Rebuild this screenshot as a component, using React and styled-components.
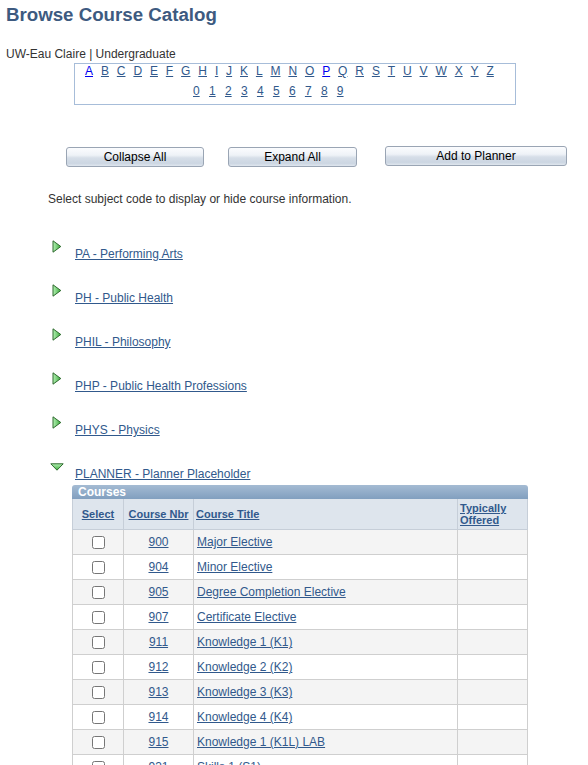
import React from 'react'
import styled, { createGlobalStyle } from 'styled-components'

const GlobalStyle = createGlobalStyle`
  html, body {
    margin: 0;
    padding: 0;
    overflow: hidden;
    background: #fff;
  }
  body {
    font-family: "Liberation Sans", Arial, sans-serif;
    font-size: 12px;
    color: #333;
  }
`

const Page = styled.div`
  padding: 4px 0 0 6px;
`

const Title = styled.h1`
  margin: 0;
  font-size: 18.7px;
  line-height: 22px;
  font-weight: bold;
  color: #3d5a80;
`

const Campus = styled.div`
  margin-top: 21px;
  line-height: 14px;
`

const AlphaBox = styled.div`
  margin: 2px 0 0 68px;
  width: 440px;
  border: 1px solid #a7bdd9;
  padding: 0 0 6px;
  display: flex;
  flex-direction: column;
  gap: 6px;
`

const AlphaRow = styled.div`
  display: flex;
  gap: ${props => props.$gap}px;
  padding-left: ${props => props.$indent}px;
  line-height: 14px;
`

const Link = styled.a`
  color: #31598c;
  text-decoration: underline;
  cursor: pointer;
`

const AlphaLink = styled(Link)`
  color: ${props => (props.$active ? '#0000ee' : '#31598c')};
`

const ButtonBar = styled.div`
  display: flex;
  align-items: flex-start;
  margin: 42px 0 0 60px;
`

const Button = styled.button`
  width: ${props => props.$w}px;
  height: 20px;
  margin-left: ${props => props.$ml || 0}px;
  margin-top: ${props => props.$mt || 0}px;
  padding: 0;
  font-family: "Liberation Sans", Arial, sans-serif;
  font-size: 12px;
  color: #000;
  border: 1px solid #9aa5b4;
  border-radius: 3px;
  background: linear-gradient(#fbfcfe 0%, #eef2f7 40%, #d6dee8 55%, #ccd6e2 85%, #dfe6ee 100%);
`

const Instruction = styled.div`
  margin: 25px 0 0 42px;
  line-height: 14px;
`

const SubjectList = styled.div`
  margin: 34px 0 0 44px;
`

const Subject = styled.div`
  margin-bottom: ${props => (props.$open ? 0 : 23)}px;
`

const SubjectHead = styled.div`
  display: flex;
  align-items: flex-start;
  height: 21px;
`

const Toggle = styled.span`
  flex: none;
  width: 25px;
  display: flex;
  padding-left: ${props => (props.$open ? 0 : 2)}px;
  padding-top: ${props => (props.$open ? 3 : 0)}px;
  box-sizing: border-box;
`

const SubjectLink = styled(Link)`
  margin-top: 7px;
  line-height: 14px;
`

const Grid = styled.div`
  margin: 4px 0 0 22px;
  width: 456px;
`

const GridBar = styled.div`
  height: 14px;
  line-height: 14px;
  padding-left: 6px;
  color: #fff;
  font-weight: bold;
  font-size: 12px;
  border-radius: 3px 3px 0 0;
  background: linear-gradient(#a4bbd3, #819fbf);
`

const Table = styled.table`
  width: 456px;
  border-collapse: collapse;
  table-layout: fixed;
  border-left: 1px solid #9fb4cc;
  border-right: 1px solid #9fb4cc;
`

const Th = styled.th`
  height: 30px;
  padding: 0 2px;
  background: #dee5ed;
  border: 1px solid #c6ced8;
  border-top: none;
  font-size: 11px;
  line-height: 12px;
  font-weight: bold;
  text-align: ${props => props.$align || 'center'};
  vertical-align: middle;
`

const HeadLink = styled(Link)`
  font-weight: bold;
`

const Row = styled.tr`
  background: ${props => (props.$alt ? '#fff' : '#f4f4f4')};
`

const Td = styled.td`
  height: 24px;
  padding: 0 3px;
  border: 1px solid #cfcfcf;
  text-align: ${props => props.$align || 'left'};
  vertical-align: middle;
  line-height: 14px;
`

const Check = styled.input`
  width: 13px;
  height: 13px;
  margin: 0;
  vertical-align: middle;
`

const RightArrow = () => (
  <svg width="10" height="13" viewBox="0 0 10 13">
    <defs>
      <linearGradient id="arrowRight" x1="0" x2="1" y1="0" y2="0">
        <stop offset="0" stopColor="#b4f2b4" />
        <stop offset="1" stopColor="#3caa3c" />
      </linearGradient>
    </defs>
    <path d="M1 0.8 L8.8 6.5 L1 12.2 Z" fill="url(#arrowRight)" stroke="#2e6a2e" strokeWidth="1" />
  </svg>
)

const DownArrow = () => (
  <svg width="14" height="8" viewBox="0 0 14 8">
    <defs>
      <linearGradient id="arrowDown" x1="0" x2="0" y1="0" y2="1">
        <stop offset="0" stopColor="#b4f2b4" />
        <stop offset="1" stopColor="#3caa3c" />
      </linearGradient>
    </defs>
    <path d="M0.8 0.8 H13.2 L7 7.2 Z" fill="url(#arrowDown)" stroke="#2e6a2e" strokeWidth="1" />
  </svg>
)

const letters = 'ABCDEFGHIJKLMNOPQRSTUVWXYZ'.split('')
const digits = '0123456789'.split('')

const subjects = [
  'PA - Performing Arts',
  'PH - Public Health',
  'PHIL - Philosophy',
  'PHP - Public Health Professions',
  'PHYS - Physics',
]

const courses = [
  ['900', 'Major Elective'],
  ['904', 'Minor Elective'],
  ['905', 'Degree Completion Elective'],
  ['907', 'Certificate Elective'],
  ['911', 'Knowledge 1 (K1)'],
  ['912', 'Knowledge 2 (K2)'],
  ['913', 'Knowledge 3 (K3)'],
  ['914', 'Knowledge 4 (K4)'],
  ['915', 'Knowledge 1 (K1L) LAB'],
  ['931', 'Skills 1 (S1)'],
  ['932', 'Skills 2 (S2)'],
]

function App() {
  return (
    <Page>
      <GlobalStyle />
      <Title>Browse Course Catalog</Title>
      <Campus>UW-Eau Claire | Undergraduate</Campus>
      <AlphaBox>
        <AlphaRow $gap={7.9} $indent={10}>
          {letters.map(l => (
            <AlphaLink key={l} $active={l === 'A' || l === 'P'}>{l}</AlphaLink>
          ))}
        </AlphaRow>
        <AlphaRow $gap={9.3} $indent={118}>
          {digits.map(d => (
            <AlphaLink key={d}>{d}</AlphaLink>
          ))}
        </AlphaRow>
      </AlphaBox>

      <ButtonBar>
        <Button $w={138}>Collapse All</Button>
        <Button $w={129} $ml={24}>Expand All</Button>
        <Button $w={182} $ml={28} $mt={-1}>Add to Planner</Button>
      </ButtonBar>

      <Instruction>Select subject code to display or hide course information.</Instruction>

      <SubjectList>
        {subjects.map(s => (
          <Subject key={s}>
            <SubjectHead>
              <Toggle><RightArrow /></Toggle>
              <SubjectLink>{s}</SubjectLink>
            </SubjectHead>
          </Subject>
        ))}
        <Subject $open>
          <SubjectHead>
            <Toggle $open><DownArrow /></Toggle>
            <SubjectLink>PLANNER - Planner Placeholder</SubjectLink>
          </SubjectHead>
          <Grid>
            <GridBar>Courses</GridBar>
            <Table>
              <colgroup>
                <col style={{ width: 51 }} />
                <col style={{ width: 70 }} />
                <col style={{ width: 264 }} />
                <col style={{ width: 70 }} />
              </colgroup>
              <thead>
                <tr>
                  <Th><HeadLink>Select</HeadLink></Th>
                  <Th><HeadLink>Course Nbr</HeadLink></Th>
                  <Th $align="left"><HeadLink>Course Title</HeadLink></Th>
                  <Th $align="left"><HeadLink>Typically Offered</HeadLink></Th>
                </tr>
              </thead>
              <tbody>
                {courses.map(([nbr, title], i) => (
                  <Row key={nbr} $alt={i % 2 === 1}>
                    <Td $align="center"><Check type="checkbox" /></Td>
                    <Td $align="center"><Link>{nbr}</Link></Td>
                    <Td><Link>{title}</Link></Td>
                    <Td />
                  </Row>
                ))}
              </tbody>
            </Table>
          </Grid>
        </Subject>
      </SubjectList>
    </Page>
  )
}

export default App
